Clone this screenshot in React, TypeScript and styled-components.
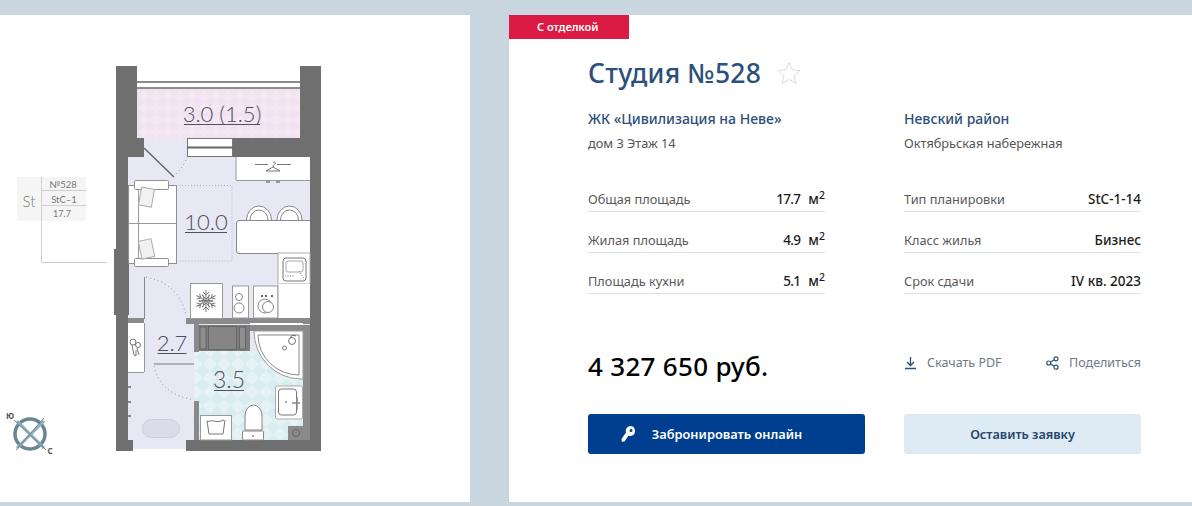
import React from "react";
import styled, { createGlobalStyle } from "styled-components";

const Global = createGlobalStyle`
  html, body { margin: 0; padding: 0; background: #c9d6e0; }
  body { font-family: "Noto Sans", "Open Sans", sans-serif; width: 1192px; height: 506px; overflow: hidden; }
`;

const Page = styled.div`
  display: grid;
  grid-template-columns: 470px 683px;
  column-gap: 39px;
  padding-top: 15px;
  height: 487px;
`;
const PlanPanel = styled.section`
  background: #fff;
  height: 487px;
`;
const PlanSvg = styled.svg`
  display: block;
`;
const InfoPanel = styled.section`
  background: #fff;
  height: 487px;
  display: flex;
  flex-direction: column;
  align-items: flex-start;
`;
const Badge = styled.div`
  width: 120px;
  height: 24px;
  box-sizing: border-box;
  padding-left: 28px;
  background: #dc1b44;
  color: #fff;
  font-size: 11px;
  font-weight: 600;
  line-height: 24px;
`;
const Body = styled.div`
  width: 553px;
  margin-left: 79px;
  display: flex;
  flex-direction: column;
`;
const TitleRow = styled.div`
  display: flex;
  align-items: center;
  gap: 16px;
  height: 34px;
  margin-top: 17px;
`;
const Title = styled.h1`
  margin: 0;
  font-size: 26.5px;
  font-weight: 500;
  line-height: 34px;
  letter-spacing: 0.25px;
  color: #2b5079;
`;
const Columns = styled.div`
  display: grid;
  grid-template-columns: 237px 237px;
  column-gap: 79px;
  margin-top: 19px;
`;
const Column = styled.div`
  display: flex;
  flex-direction: column;
`;
const Name = styled.div`
  font-size: 14px;
  font-weight: 500;
  line-height: 20px;
  color: #2b5079;
`;
const Address = styled.div`
  font-size: 12.75px;
  line-height: 18px;
  margin-top: 5px;
  margin-bottom: 19px;
  color: #555;
`;
const Row = styled.div`
  display: flex;
  justify-content: space-between;
  align-items: flex-end;
  box-sizing: border-box;
  height: 41px;
  padding-bottom: 3px;
  border-bottom: 1px solid #dde1e4;
`;
const RowLabel = styled.span`
  font-size: 12.75px;
  line-height: 18px;
  color: #5a5a5a;
`;
const RowValue = styled.span`
  font-size: 13.5px;
  font-weight: 500;
  line-height: 18px;
  color: #1c1c1c;
`;
const Figure = styled.span`
  letter-spacing: -0.7px;
`;
const Unit = styled.span`
  margin-left: 8px;
  sup {
    font-size: 10.5px;
    line-height: 0;
    vertical-align: 5px;
  }
`;
const Middle = styled.div`
  display: grid;
  grid-template-columns: 237px 237px;
  column-gap: 79px;
  margin-top: 50px;
  align-items: center;
`;
const Price = styled.div`
  font-size: 26px;
  font-weight: 500;
  line-height: 44px;
  letter-spacing: 0.3px;
  color: #000;
`;
const Links = styled.div`
  display: flex;
  justify-content: space-between;
  margin-bottom: 6px;
`;
const LinkItem = styled.a`
  display: flex;
  align-items: center;
  gap: 10px;
  font-size: 12.5px;
  line-height: 18px;
  color: #6c7a85;
`;
const Buttons = styled.div`
  display: grid;
  grid-template-columns: 277px 237px;
  column-gap: 39px;
  margin-top: 26px;
`;
const Button = styled.button<{ $primary?: boolean }>`
  height: 40px;
  border: 0;
  border-radius: 3px;
  padding: 0 ${(p) => (p.$primary ? "30px" : "0")} 0 0;
  display: flex;
  align-items: center;
  justify-content: center;
  gap: 17px;
  font-family: inherit;
  font-size: ${(p) => (p.$primary ? "12.8px" : "12.6px")};
  font-weight: 600;
  background: ${(p) => (p.$primary ? "#003f8f" : "#deeaf4")};
  color: ${(p) => (p.$primary ? "#fff" : "#24466e")};
`;

const WALL = "#6f6f6f";
const LINE = "#8c8c8c";
const LABEL = "#4f4f60";

const walls: [number, number, number, number][] = [
  [116, 66, 21, 91],
  [116, 138, 28, 19],
  [233, 138, 88, 19],
  [300, 66, 21, 91],
  [310, 157, 11, 294],
  [116, 157, 12, 294],
  [114, 249, 15, 66],
  [116, 440, 17, 11],
  [186, 440, 135, 11],
];

const greyWalls: [number, number, number, number][] = [
  [186, 318, 124, 6],
  [128, 318, 16, 5],
  [194, 324, 5, 28],
  [250, 325, 60, 6],
  [303, 325, 7, 115],
  [194, 401, 5, 39],
  [144, 277, 1, 42],
];

function RoomLabel({ x, y, w, size = 22, children }: { x: number; y: number; w: number; size?: number; children: string }) {
  return (
    <g>
      <text x={x} y={y} textAnchor="middle" fontFamily="Lato, sans-serif" fontWeight={300} fontSize={size} fill={LABEL}>
        {children}
      </text>
      <line x1={x - w / 2} x2={x + w / 2} y1={y + 2.5} y2={y + 2.5} stroke={LABEL} strokeWidth={1} />
    </g>
  );
}

function Snowflake() {
  const arms = [0, 60, 120];
  return (
    <g stroke="#7c7c7c" strokeWidth={1} fill="none">
      {arms.map((a) => (
        <g key={a} transform={`rotate(${a} 206 301)`}>
          <path d="M206 290V312M203 292l3 3 3-3M203 310l3-3 3 3M202 295l4 4 4-4M202 307l4-4 4 4" />
        </g>
      ))}
    </g>
  );
}

function FloorPlan() {
  return (
    <PlanSvg width={470} height={487} viewBox="0 15 470 487">
      <defs>
        <pattern id="balcony" width="12" height="12" patternUnits="userSpaceOnUse">
          <rect width="12" height="12" fill="#f5e8f3" />
          <path d="M6 0l6 6-6 6-6-6z" fill="#f0e2ef" />
        </pattern>
        <pattern id="tile" width="14" height="14" patternUnits="userSpaceOnUse">
          <rect width="14" height="14" fill="#e6f3f5" />
          <path d="M7 0l7 7-7 7-7-7z" fill="#d9ecef" />
        </pattern>
      </defs>

      {/* key table */}
      <rect x={17} y={177} width={69} height={44} fill="#f5f5f5" />
      <path d="M41.500 177V262.500H107M41 190.500H86M41 205.500H86" fill="none" stroke="#cfcfcf" strokeWidth={1} />
      <g fontFamily="Lato, sans-serif" fill="#777" textAnchor="middle">
        <text x={29} y={207} fontSize={15} fontWeight={300}>St</text>
        <text x={63} y={188} fontSize={9.500}>№528</text>
        <text x={64} y={203} fontSize={9.500}>StC–1</text>
        <text x={62} y={217} fontSize={9}>17.7</text>
      </g>

      {/* rooms */}
      <rect x={137} y={89} width={163} height={50} fill="url(#balcony)" />
      <path d="M137 82H300M137 88H300" stroke={LINE} strokeWidth={2} />
      <path d="M128 138H233V157H310V440H186V449H133V440H128Z" fill="#e8e7f4" />
      <rect x={199} y={351} width={104} height={89} fill="url(#tile)" />
      <rect x={194} y={351} width={5} height={50} fill="url(#tile)" />

      {/* window to balcony */}
      <rect x={187.500} y={138.500} width={45} height={18} fill="#fff" stroke="#777" />
      <rect x={187} y={146.500} width={46} height={2} fill="#666" />

      {/* walls */}
      {walls.map(([x, y, w, h]) => (
        <rect key={`${x}-${y}`} x={x} y={y} width={w} height={h} fill={WALL} />
      ))}
      {greyWalls.map(([x, y, w, h]) => (
        <rect key={`${x}-${y}`} x={x} y={y} width={w} height={h} fill="#8a8a8a" />
      ))}
      <rect x={250} y={323} width={53} height={2} fill="#fff" />
      <path d="M154 364H194" stroke="#777" strokeWidth={1} />

      {/* entry door */}
      <path d="M144 148L174 177" stroke="#666" strokeWidth={1.500} />
      <path d="M176 174Q184 166 187 157" fill="none" stroke="#888" strokeDasharray="1 3" />

      {/* wardrobe */}
      <rect x={236} y={157} width={74} height={23} fill="#fff" />
      <path d="M236 180.500H310M236 157V180" stroke="#999" />
      <path d="M255 164.500H268M277 164.500H291M273 163c1-2 3-1 2 1-1 1-2 1-2 3l-7 4h14l-7-4" fill="none" stroke="#777" />
      <rect x={266} y={181} width={4} height={2} fill="#999" />
      <rect x={276} y={181} width={4} height={2} fill="#999" />

      {/* rug outline */}
      <path d="M176 185.500H232V261H176" fill="none" stroke="#b0b0c0" strokeDasharray="1 2" />

      {/* sofa */}
      <rect x={128.500} y={185.500} width={48} height={78} fill="#fff" stroke="#8f8f8f" />
      <path d="M138.500 186V263M128 223.500H176" stroke="#9a9a9a" />
      <rect x={134.500} y={180.500} width={34} height={9} rx={1} fill="#fff" stroke="#8f8f8f" />
      <rect x={134.500} y={258.500} width={34} height={8} rx={1} fill="#fff" stroke="#8f8f8f" />
      <rect x={140} y={188} width={13} height={18} fill="#f1f1f1" stroke="#aaa" transform="rotate(10 146 197)" />
      <rect x={140} y={240} width={13} height={18} fill="#f1f1f1" stroke="#aaa" transform="rotate(-12 146 249)" />

      {/* dining */}
      <path d="M246.500 220a12.500 14 0 0 1 25 0M250 220a9 10 0 0 1 18 0M277 220a12.500 14 0 0 1 25 0M280.500 220a9 10 0 0 1 18 0" fill="#fff" stroke="#888" />
      <path d="M310 220.500H239a2.500 2.500 0 0 0-2.500 2.500V251a2.500 2.500 0 0 0 2.500 2.500H310" fill="#fff" stroke="#8a8a8a" />

      {/* sink cabinet */}
      <rect x={278} y={253} width={32} height={31} fill="#fff" stroke="#aaa" />
      <rect x={283} y={258} width={23} height={23} rx={3} fill="#fff" stroke="#777" />
      <rect x={286} y={261} width={17} height={11} rx={2} fill="none" stroke="#aaa" />
      <path d="M285 276h10M299 271l4 6 1 3" stroke="#777" strokeDasharray="1 1.500" fill="none" />

      {/* kitchen */}
      <rect x={190.500} y={283.500} width={32} height={35} fill="#fff" stroke="#999" />
      <Snowflake />
      <rect x={232.500} y={286} width={16} height={32} fill="#fff" stroke="#999" />
      <circle cx={239} cy={297} r={3.500} fill="none" stroke="#888" />
      <circle cx={239} cy={308} r={5} fill="none" stroke="#888" />
      <rect x={253.500} y={286} width={24.500} height={32} fill="#fff" stroke="#999" />
      <rect x={278} y={284} width={32} height={34} fill="#fff" />
      <path d="M278 285V318" stroke="#999" />
      <circle cx={265} cy={306} r={7} fill="none" stroke="#888" />
      <circle cx={268} cy={307} r={5.500} fill="#fff" stroke="#888" />
      <path d="M262 295v2M266 295v2M272 295v2" stroke="#666" strokeWidth={2} />

      {/* shaft */}
      <rect x={199} y={325} width={51} height={26} fill="#7d7d7d" />
      <rect x={200} y={327} width={6} height={22} fill="#8f8f8f" stroke="#666" />
      <rect x={208.500} y={326.500} width={28} height={23} fill="#858585" stroke="#666" />
      <rect x={239.500} y={327} width={6} height={22} fill="#8f8f8f" stroke="#666" />

      {/* shower */}
      <path d="M254 331H303V379H301A47 48 0 0 1 254 331Z" fill="#fff" stroke="#999" />
      <path d="M258 335H299V375A41 40 0 0 1 258 335Z" fill="#fff" stroke="#888" />
      <circle cx={292} cy={341} r={3.500} fill="none" stroke="#777" />
      <path d="M290 338a4 4 0 0 1 6-2" fill="none" stroke="#666" />
      <circle cx={284.500} cy={348} r={2} fill="none" stroke="#777" />

      {/* basin */}
      <rect x={275.500} y={386} width={27} height={33} rx={2} fill="#fff" stroke="#aaa" />
      <rect x={278.500} y={389} width={18} height={26} rx={3} fill="#fff" stroke="#777" />
      <circle cx={286} cy={402} r={1} fill="#888" />
      <path d="M292 403h8M297 397v13" stroke="#888" strokeWidth={1.500} />

      {/* toilet */}
      <path d="M245 430V416a8.500 11 0 0 1 17 0V430Z" fill="#fff" stroke="#888" />
      <rect x={242.500} y={431} width={21} height={9} rx={1} fill="#fff" stroke="#888" />
      <circle cx={253} cy={436} r={1} fill="#888" />

      {/* floor drain shaft */}
      <rect x={288} y={426} width={15} height={14} fill="#8a8a8a" />
      <circle cx={296} cy={433} r={3.500} fill="none" stroke="#666" />

      {/* laundry */}
      <rect x={200.500} y={415.500} width={31} height={24.500} fill="#fff" stroke="#999" />
      <path d="M207 421c3 1 5-1 7 0s5 1 10-1M207 421l2 13h14l2-14" fill="none" stroke="#777" />

      {/* hall storage */}
      <rect x={128} y={323} width={16} height={49} fill="#fff" />
      <path d="M128 372.500H144M144.500 323V372" stroke="#999" />
      <circle cx={133} cy={342} r={3} fill="none" stroke="#777" />
      <circle cx={138} cy={345} r={2.500} fill="none" stroke="#777" />
      <path d="M132 345l2 10 2 1 0-6M137 348l2 7" fill="none" stroke="#777" />

      {/* door arcs and hall details */}
      <path d="M146 277Q180 284 186 316M154 366Q160 394 194 400" fill="none" stroke="#8c8c9a" strokeDasharray="1 3" />
      <path d="M128 387H131M128 402H131M128 416H131" stroke="#888" strokeWidth={2} />
      <rect x={142.500} y={419.500} width={37} height={18} rx={9} fill="#dcdbea" stroke="#cfcfdc" />

      <RoomLabel x={222} y={122} w={76}>3.0 (1.5)</RoomLabel>
      <RoomLabel x={206} y={230} w={42}>10.0</RoomLabel>
      <RoomLabel x={172} y={351} w={29}>2.7</RoomLabel>
      <RoomLabel x={229} y={388} size={23} w={30}>3.5</RoomLabel>

      {/* compass */}
      <circle cx={30} cy={434} r={15} fill="none" stroke="#688793" strokeWidth={3.500} />
      <path d="M17 421L44 448M44 421L17 448" stroke="#8fb0bc" strokeWidth={3} />
      <path d="M14 420L46 450M44 418L16 450" stroke="#688793" strokeWidth={1} />
      <text x={10} y={419} textAnchor="middle" fontFamily="Noto Sans, sans-serif" fontSize={8} fontWeight={700} fill="#555">Ю</text>
      <text x={50} y={454} textAnchor="middle" fontFamily="Noto Sans, sans-serif" fontSize={8} fontWeight={700} fill="#555">С</text>
    </PlanSvg>
  );
}

const StarIcon = () => (
  <svg width="24" height="24" viewBox="0 0 24 24" fill="none" stroke="#dcdcdc" strokeWidth="1">
    <path d="M12 1.500l3.200 7.300 7.800.8-5.900 5.200 1.700 7.700-6.800-4-6.800 4 1.700-7.700L1 9.600l7.800-.8z" />
  </svg>
);

const DownloadIcon = () => (
  <svg width="13" height="14" viewBox="0 0 13 14" fill="none" stroke="#2b5079" strokeWidth="1.300">
    <path d="M6.500 1v8M3 6l3.500 3.500L10 6M1 12.500h11" />
  </svg>
);

const ShareIcon = () => (
  <svg width="13" height="14" viewBox="0 0 13 14" fill="none" stroke="#2b5079" strokeWidth="1.200">
    <circle cx="2.800" cy="7" r="2" />
    <circle cx="10" cy="2.800" r="2" />
    <circle cx="10" cy="11.200" r="2" />
    <path d="M4.500 6l3.800-2.200M4.500 8l3.800 2.200" />
  </svg>
);

const KeyIcon = () => (
  <svg width="14" height="16" viewBox="0 0 14 16" fill="#fff">
    <path d="M9 0a5 5 0 0 1 1 9.900 5 5 0 0 1-2.600-.2L3.500 15.500 .8 15.800 .5 13 5 6.500A5 5 0 0 1 9 0zm1 3a1.500 1.500 0 1 0 0 3 1.500 1.500 0 0 0 0-3z" />
  </svg>
);

const Value = ({ v }: { v: string }) => (
  <RowValue>
    <Figure>{v}</Figure>
    <Unit>
      м<sup>2</sup>
    </Unit>
  </RowValue>
);

export default function App() {
  return (
    <>
      <Global />
      <Page>
        <PlanPanel>
          <FloorPlan />
        </PlanPanel>
        <InfoPanel>
          <Badge>С отделкой</Badge>
          <Body>
            <TitleRow>
              <Title>Студия №528</Title>
              <StarIcon />
            </TitleRow>
            <Columns>
              <Column>
                <Name>ЖК «Цивилизация на Неве»</Name>
                <Address>дом 3 Этаж 14</Address>
                <Row>
                  <RowLabel>Общая площадь</RowLabel>
                  <Value v="17.7" />
                </Row>
                <Row>
                  <RowLabel>Жилая площадь</RowLabel>
                  <Value v="4.9" />
                </Row>
                <Row>
                  <RowLabel>Площадь кухни</RowLabel>
                  <Value v="5.1" />
                </Row>
              </Column>
              <Column>
                <Name>Невский район</Name>
                <Address>Октябрьская набережная</Address>
                <Row>
                  <RowLabel>Тип планировки</RowLabel>
                  <RowValue>StC-1-14</RowValue>
                </Row>
                <Row>
                  <RowLabel>Класс жилья</RowLabel>
                  <RowValue>Бизнес</RowValue>
                </Row>
                <Row>
                  <RowLabel>Срок сдачи</RowLabel>
                  <RowValue>IV кв. 2023</RowValue>
                </Row>
              </Column>
            </Columns>
            <Middle>
              <Price>4 327 650 руб.</Price>
              <Links>
                <LinkItem>
                  <DownloadIcon />
                  Скачать PDF
                </LinkItem>
                <LinkItem>
                  <ShareIcon />
                  Поделиться
                </LinkItem>
              </Links>
            </Middle>
            <Buttons>
              <Button $primary>
                <KeyIcon />
                Забронировать онлайн
              </Button>
              <Button>Оставить заявку</Button>
            </Buttons>
          </Body>
        </InfoPanel>
      </Page>
    </>
  );
}
